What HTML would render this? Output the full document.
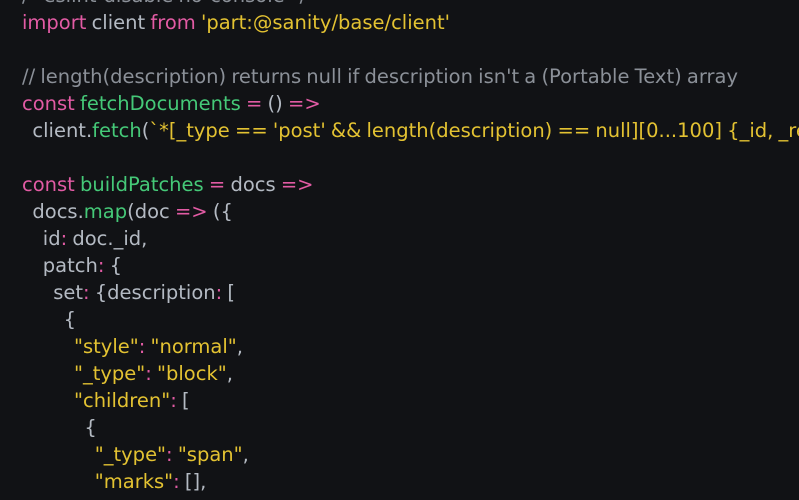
<!DOCTYPE html>
<html><head><style>
html,body{margin:0;padding:0;background:#111215;width:799px;height:500px;overflow:hidden;position:relative}
pre{margin:0;position:absolute;left:22px;top:-18px;width:777px;height:518px;overflow:hidden;font-family:"DejaVu Sans",sans-serif;font-size:19.5px;line-height:27px;color:#b4bac3;white-space:pre;word-spacing:-1px}
.k{color:#e25ba4}.s{color:#e3c232}.f{color:#45c978}.c{color:#8b9098}
</style></head><body>
<pre><span class="c">/* eslint-disable no-console */</span>
<span class="k">import</span> client <span class="k">from</span> <span class="s">'part:@sanity/base/client'</span>

<span class="c">// length(description) returns null if description isn't a (Portable Text) array</span>
<span class="k">const</span> <span class="f">fetchDocuments</span> <span class="k">=</span> () <span class="k">=&gt;</span>
  client.<span class="f">fetch</span>(<span class="s">`*[_type == 'post' &amp;&amp; length(description) == null][0...100] {_id, _rev, description}`</span>)

<span class="k">const</span> <span class="f">buildPatches</span> <span class="k">=</span> docs <span class="k">=&gt;</span>
  docs.<span class="f">map</span>(doc <span class="k">=&gt;</span> ({
    id<span class="k">:</span> doc._id,
    patch<span class="k">:</span> {
      set<span class="k">:</span> {description<span class="k">:</span> [
        {
          <span class="s">"style"</span><span class="k">:</span> <span class="s">"normal"</span>,
          <span class="s">"_type"</span><span class="k">:</span> <span class="s">"block"</span>,
          <span class="s">"children"</span><span class="k">:</span> [
            {
              <span class="s">"_type"</span><span class="k">:</span> <span class="s">"span"</span>,
              <span class="s">"marks"</span><span class="k">:</span> [],
              <span class="s">"text"</span><span class="k">:</span> doc.description
</pre>
</body></html>
